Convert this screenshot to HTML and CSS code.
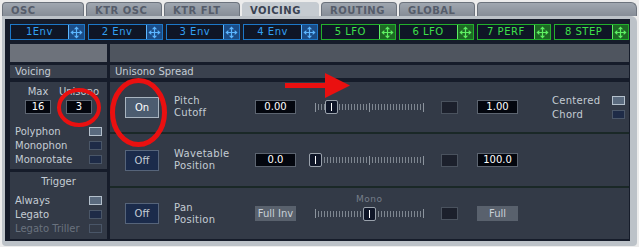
FILE: index.html
```html
<!DOCTYPE html>
<html lang="en">

<head>
    <meta charset="UTF-8">
    <title>Voicing</title>
    <link rel="stylesheet" href="styles.css">
</head>

<body>
    <div class="tabs">
        <div class="tab tab-wide">OSC</div>
        <div class="tab">KTR OSC</div>
        <div class="tab">KTR FLT</div>
        <div class="tab active">VOICING</div>
        <div class="tab">ROUTING</div>
        <div class="tab">GLOBAL</div>
        <div class="tab tab-blank"></div>
    </div>

    <div class="frame">
        <div class="slots">
            <div class="slot env"><span class="slot-name">1Env</span><span class="slot-move"><svg viewBox="0 0 15 15"><use href="#move"/></svg></span></div>
            <div class="slot env"><span class="slot-name">2 Env</span><span class="slot-move"><svg viewBox="0 0 15 15"><use href="#move"/></svg></span></div>
            <div class="slot env"><span class="slot-name">3 Env</span><span class="slot-move"><svg viewBox="0 0 15 15"><use href="#move"/></svg></span></div>
            <div class="slot env"><span class="slot-name">4 Env</span><span class="slot-move"><svg viewBox="0 0 15 15"><use href="#move"/></svg></span></div>
            <div class="slot lfo"><span class="slot-name">5 LFO</span><span class="slot-move"><svg viewBox="0 0 15 15"><use href="#move"/></svg></span></div>
            <div class="slot lfo"><span class="slot-name">6 LFO</span><span class="slot-move"><svg viewBox="0 0 15 15"><use href="#move"/></svg></span></div>
            <div class="slot lfo"><span class="slot-name">7 PERF</span><span class="slot-move"><svg viewBox="0 0 15 15"><use href="#move"/></svg></span></div>
            <div class="slot lfo"><span class="slot-name">8 STEP</span><span class="slot-move"><svg viewBox="0 0 15 15"><use href="#move"/></svg></span></div>
        </div>

        <div class="bars">
            <div class="bar bar-left"></div>
            <div class="bar bar-right"></div>
        </div>

        <div class="panels">
            <div class="col-left">
                <div class="head">Voicing</div>
                <div class="box voices">
                    <div class="counts">
                        <div class="count">
                            <span class="count-label">Max</span>
                            <span class="value count-value">16</span>
                        </div>
                        <div class="count">
                            <span class="count-label">Unisono</span>
                            <span class="value count-value">3</span>
                        </div>
                    </div>
                    <div class="option"><span>Polyphon</span><span class="check on"></span></div>
                    <div class="option"><span>Monophon</span><span class="check"></span></div>
                    <div class="option"><span>Monorotate</span><span class="check"></span></div>
                </div>
                <div class="box trigger">
                    <div class="box-title">Trigger</div>
                    <div class="option"><span>Always</span><span class="check on"></span></div>
                    <div class="option"><span>Legato</span><span class="check"></span></div>
                    <div class="option disabled"><span>Legato Triller</span><span class="check"></span></div>
                </div>
            </div>

            <div class="col-right">
                <div class="head">Unisono Spread</div>
                <div class="spread">
                    <div class="row">
                        <span class="toggle on">On</span>
                        <span class="row-label">Pitch<br>Cutoff</span>
                        <span class="value">0.00</span>
                        <div class="track"><span class="knob" style="left: 10px"></span></div>
                        <span class="square"></span>
                        <span class="value">1.00</span>
                        <div class="modes">
                            <div class="mode"><span>Centered</span><span class="check on"></span></div>
                            <div class="mode"><span>Chord</span><span class="check"></span></div>
                        </div>
                    </div>
                    <div class="row">
                        <span class="toggle">Off</span>
                        <span class="row-label">Wavetable<br>Position</span>
                        <span class="value">0.0</span>
                        <div class="track"><span class="knob" style="left: -6px"></span></div>
                        <span class="square"></span>
                        <span class="value">100.0</span>
                    </div>
                    <div class="row">
                        <span class="toggle">Off</span>
                        <span class="row-label">Pan<br>Position</span>
                        <span class="flat">Full Inv</span>
                        <div class="track"><span class="track-note">Mono</span><span class="knob" style="left: 48px"></span></div>
                        <span class="square"></span>
                        <span class="flat">Full</span>
                    </div>
                </div>
            </div>
        </div>
    </div>

    <svg class="marks" width="639" height="247">
        <defs>
            <g id="move">
                <path d="M2.5 7.5H12.5M7.5 2.5V12.5" stroke="currentColor" stroke-width="1.4" fill="none"/>
                <path d="M7.5 0.5L4.5 3.8H10.5ZM7.5 14.5L4.5 11.2H10.5ZM0.5 7.5L3.8 4.5V10.5ZM14.5 7.5L11.2 4.5V10.5Z" fill="currentColor"/>
            </g>
        </defs>
        <ellipse cx="79" cy="107.5" rx="20" ry="17.5" stroke="#ea1010" stroke-width="4" fill="none"/>
        <ellipse cx="138.5" cy="112.5" rx="26" ry="32" stroke="#ea1010" stroke-width="5" fill="none"/>
        <rect x="285" y="83" width="42" height="5" fill="#ea1010"/>
        <polygon points="325,73 350,85.5 325,98" fill="#ea1010"/>
    </svg>
</body>

</html>
```

FILE: styles.css
```css
body {
    margin: 0;
    width: 639px;
    height: 247px;
    background-color: #ececec;
    font-family: 'DejaVu Sans', sans-serif;
    font-size: 10px;
    color: #c4ccd4;
    position: relative;
    overflow: hidden;
}

/* tab strip */
.tabs {
    display: flex;
    gap: 2px;
    height: 16px;
    padding: 2px 0 0 2px;
    box-sizing: border-box;
}

.tab {
    width: 76px;
    box-sizing: border-box;
    padding: 2px 0 0 8px;
    border: 1px solid #6c737d;
    border-bottom: none;
    border-radius: 4px 4px 0 0;
    background: linear-gradient(#a0a7b0, #868d97);
    color: #555c6a;
    font-weight: bold;
    letter-spacing: 0.5px;
}

.tab-wide {
    width: 82px;
}

.tab.active {
    width: 77px;
    padding-left: 7px;
    border-color: #c5cbd1;
    background: #c5cbd1;
    color: #3a4252;
}

.tab-blank {
    width: 160px;
    border-radius: 4px 6px 0 0;
}

/* main frame */
.frame {
    margin-left: 2px;
    width: 635px;
    height: 230px;
    box-sizing: border-box;
    border-style: solid;
    border-color: #bcc2c8;
    border-width: 3px 7px 5px 3px;
    border-radius: 0 6px 4px 4px;
    background-color: #161c2a;
    padding: 5px 1px 2px 5px;
    display: flex;
    flex-direction: column;
}

.slots {
    display: grid;
    grid-template-columns: repeat(8, 1fr);
    gap: 3px;
    height: 16px;
}

.slot {
    display: flex;
    border: 1px solid;
    background-color: #0f1626;
}

.slot-name {
    flex: 1;
    text-align: center;
    line-height: 14px;
    letter-spacing: 0.5px;
}

.slot-move {
    width: 15px;
    display: flex;
    align-items: center;
    justify-content: center;
    border-left: 1px solid;
}

.slot-move svg {
    width: 13px;
    height: 13px;
}

.slot.env {
    border-color: #1d78c8;
    color: #33a0f2;
}

.slot.env .slot-move {
    background-color: #1b4c86;
    color: #5cb6ff;
}

.slot.lfo {
    border-color: #22b02c;
    color: #3fe04a;
}

.slot.lfo .slot-move {
    background-color: #1d6824;
    color: #5ef062;
}

.bars {
    display: grid;
    grid-template-columns: 97px 1fr;
    gap: 3px;
    height: 18px;
    margin-top: 4px;
}

.bar-left {
    background-color: #6d727b;
}

.bar-right {
    background-color: #4f555f;
}

/* panels */
.panels {
    display: grid;
    grid-template-columns: 97px 1fr;
    gap: 3px;
    margin-top: 3px;
    flex: 1;
}

.col-left,
.col-right {
    display: flex;
    flex-direction: column;
}

.head {
    height: 13px;
    line-height: 13px;
    padding-left: 5px;
    background-color: #3a414e;
    margin-bottom: 4px;
}

.box {
    background-color: #333a47;
    padding: 0 5px;
}

.voices {
    height: 87px;
    padding-top: 4px;
    box-sizing: border-box;
}

.trigger {
    margin-top: 3px;
    flex: 1;
    padding-top: 4px;
}

.box-title {
    text-align: center;
    line-height: 12px;
    margin-bottom: 5px;
}

.counts {
    display: flex;
    gap: 15px;
    padding-left: 10px;
    margin-bottom: 10px;
}

.count {
    width: 26px;
    display: flex;
    flex-direction: column;
    align-items: center;
    gap: 2px;
}

.count-label {
    line-height: 12px;
    white-space: nowrap;
}

.value {
    width: 41px;
    height: 14px;
    box-sizing: border-box;
    border: 1px solid #5c6470;
    background-color: #03060e;
    color: #ffffff;
    text-align: center;
    line-height: 12px;
    flex: none;
}

.count-value {
    width: 26px;
}

.option {
    display: flex;
    justify-content: space-between;
    align-items: center;
    height: 14px;
}

.option.disabled {
    color: #6a727e;
}

.check {
    width: 13px;
    height: 9px;
    box-sizing: border-box;
    border: 1px solid #4a5668;
    background-color: #1e2b47;
}

.check.on {
    border-color: #b4c0cc;
    background-color: #5a6a7e;
}

.disabled .check {
    background-color: transparent;
}

.spread {
    flex: 1;
    background-color: #333a47;
    display: flex;
    flex-direction: column;
}

.row {
    height: 50px;
    display: flex;
    align-items: center;
    padding-left: 15px;
}

.row + .row {
    border-top: 2px solid #1a2827;
    height: 52px;
}

.row:last-child {
    height: 51px;
}

.toggle {
    width: 34px;
    height: 21px;
    box-sizing: border-box;
    border: 1px solid #56647a;
    background-color: #1b2b4b;
    text-align: center;
    line-height: 19px;
}

.toggle.on {
    border-color: #a8b4c0;
    background-color: #4c5c70;
    color: #ffffff;
}

.row-label {
    width: 81px;
    margin-left: 15px;
    line-height: 12px;
    letter-spacing: 0.3px;
}

.flat {
    width: 41px;
    height: 15px;
    background-color: #59616d;
    color: #c8d0d8;
    text-align: center;
    line-height: 15px;
}

.track {
    position: relative;
    width: 109px;
    height: 14px;
    margin: 0 17px 0 19px;
    background:
        linear-gradient(#8c949e, #8c949e) 0 50% / 1px 9px no-repeat,
        linear-gradient(#8c949e, #8c949e) 54px 50% / 1px 9px no-repeat,
        linear-gradient(#8c949e, #8c949e) 108px 50% / 1px 9px no-repeat,
        repeating-linear-gradient(90deg, #7e8690 0 1px, transparent 1px 3px) 0 50% / 100% 6px no-repeat;
}

.knob {
    position: absolute;
    top: 0;
    width: 13px;
    height: 14px;
    box-sizing: border-box;
    border: 1px solid #9aa2ac;
    border-radius: 2px;
    background-color: #0f1628;
}

.knob::after {
    content: "";
    position: absolute;
    left: 5px;
    top: 2px;
    width: 1px;
    height: 8px;
    background-color: #ffffff;
}

.track-note {
    position: absolute;
    left: 41px;
    top: -13px;
    font-size: 9px;
    color: #767e8a;
    letter-spacing: 0.5px;
}

.square {
    width: 17px;
    height: 13px;
    box-sizing: border-box;
    border: 1px solid #4a525e;
    background-color: #1c202c;
    margin-right: 19px;
}

.modes {
    margin-left: 34px;
    display: flex;
    flex-direction: column;
    gap: 5px;
}

.mode {
    width: 73px;
    display: flex;
    justify-content: space-between;
    align-items: center;
    height: 9px;
    letter-spacing: 0.3px;
}

/* annotation layer */
.marks {
    position: absolute;
    left: 0;
    top: 0;
    pointer-events: none;
}
```
